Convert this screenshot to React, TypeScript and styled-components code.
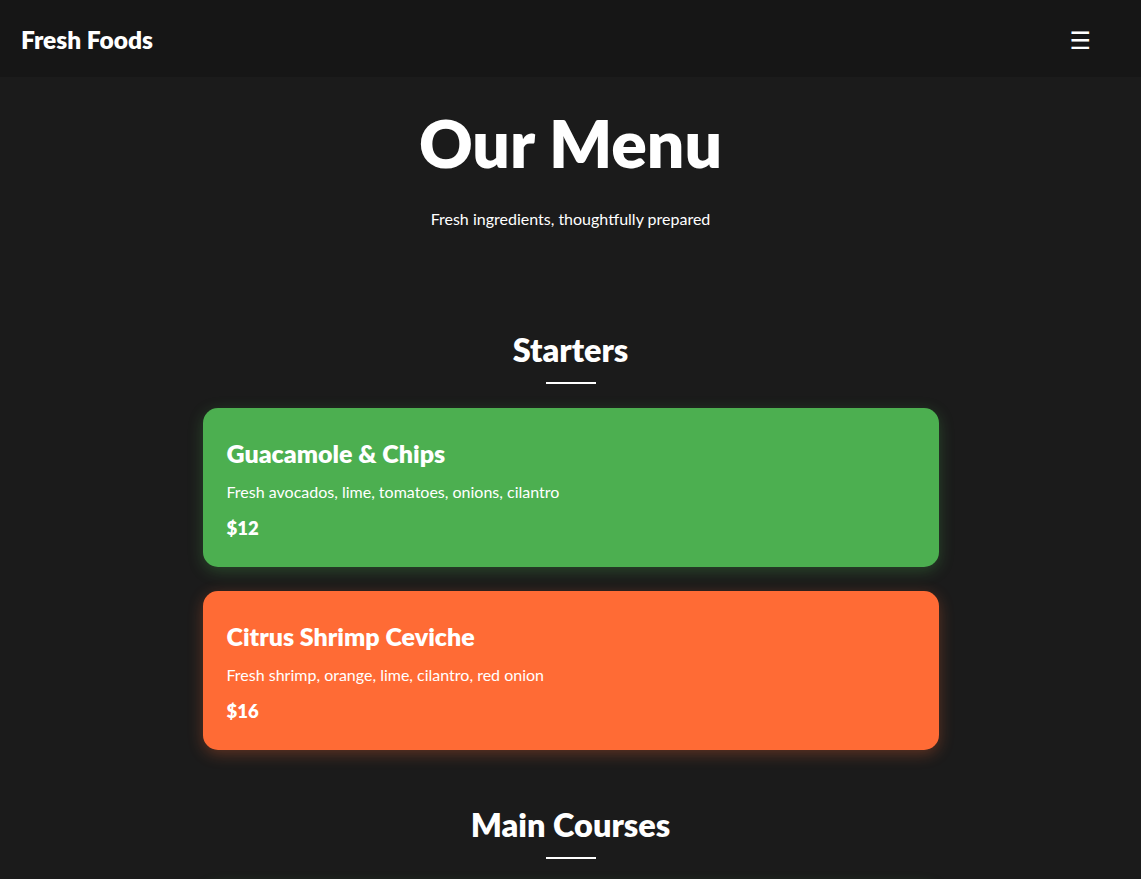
import React from 'react';
import styled, { createGlobalStyle } from 'styled-components';

const GlobalStyle = createGlobalStyle`
  * { box-sizing: border-box; }
  body {
    margin: 0;
    background: #1b1b1b;
    color: #ffffff;
    font-family: Lato, 'Open Sans', sans-serif;
  }
`;

const Nav = styled.nav`
  display: flex;
  justify-content: space-between;
  align-items: center;
  height: 77px;
  padding: 0 20px 0 21px;
  background: #161616;
`;

const Logo = styled.div`
  font-size: 24.5px;
  font-weight: 800;
  padding-top: 2px;
`;

const MenuButton = styled.button`
  background: none;
  border: none;
  color: #ffffff;
  font-size: 24px;
  margin-right: 30px;
  padding: 4px 0 0;
  cursor: pointer;
  font-family: 'DejaVu Sans', sans-serif;
`;

const Hero = styled.header`
  text-align: center;
  padding: 26px 20px 47px;
`;

const Title = styled.h1`
  margin: 0;
  font-size: 66px;
  line-height: 80px;
  font-weight: 800;
`;

const Subtitle = styled.p`
  margin: 26px 0 0;
  font-size: 16px;
`;

const Main = styled.main`
  max-width: 800px;
  margin: 0 auto;
  padding: 0 32px 40px;
`;

const Section = styled.section`
  padding-top: 55px;
`;

const SectionTitle = styled.h2`
  margin: 0 0 24px;
  text-align: center;
  font-size: 32.5px;
  font-weight: 800;
  line-height: 40px;
  &::after {
    content: '';
    display: block;
    width: 50px;
    height: 2px;
    background: #ffffff;
    margin: 12px auto 0;
  }
`;

const Cards = styled.div`
  display: flex;
  flex-direction: column;
  gap: 24px;
`;

const Card = styled.div<{ $bg: string; $glow: string }>`
  background: ${(p) => p.$bg};
  border-radius: 15px;
  padding: 30px 24px 27px;
  box-shadow: 0 4px 15px ${(p) => p.$glow};
`;

const CardTitle = styled.h3`
  margin: 0 0 12px;
  font-size: 25px;
  line-height: 30px;
  font-weight: 800;
`;

const CardText = styled.p`
  margin: 0 0 12px;
  font-size: 16px;
  line-height: 24px;
`;

const Price = styled.div`
  font-size: 18.5px;
  font-weight: 800;
  line-height: 24px;
`;

const sections = [
  {
    name: 'Starters',
    items: [
      {
        title: 'Guacamole & Chips',
        desc: 'Fresh avocados, lime, tomatoes, onions, cilantro',
        price: '$12',
        bg: '#4caf50',
        glow: 'rgba(76, 175, 80, 0.3)',
      },
      {
        title: 'Citrus Shrimp Ceviche',
        desc: 'Fresh shrimp, orange, lime, cilantro, red onion',
        price: '$16',
        bg: '#ff6b35',
        glow: 'rgba(255, 107, 53, 0.3)',
      },
    ],
  },
  {
    name: 'Main Courses',
    items: [
      {
        title: 'Grilled Salmon Bowl',
        desc: 'Wild salmon, quinoa, avocado, seasonal greens',
        price: '$24',
        bg: '#4caf50',
        glow: 'rgba(76, 175, 80, 0.3)',
      },
    ],
  },
];

export default function App() {
  return (
    <>
      <GlobalStyle />
      <Nav>
        <Logo>Fresh Foods</Logo>
        <MenuButton aria-label="Menu">☰</MenuButton>
      </Nav>
      <Hero>
        <Title>Our Menu</Title>
        <Subtitle>Fresh ingredients, thoughtfully prepared</Subtitle>
      </Hero>
      <Main>
        {sections.map((s) => (
          <Section key={s.name}>
            <SectionTitle>{s.name}</SectionTitle>
            <Cards>
              {s.items.map((it) => (
                <Card key={it.title} $bg={it.bg} $glow={it.glow}>
                  <CardTitle>{it.title}</CardTitle>
                  <CardText>{it.desc}</CardText>
                  <Price>{it.price}</Price>
                </Card>
              ))}
            </Cards>
          </Section>
        ))}
      </Main>
    </>
  );
}
